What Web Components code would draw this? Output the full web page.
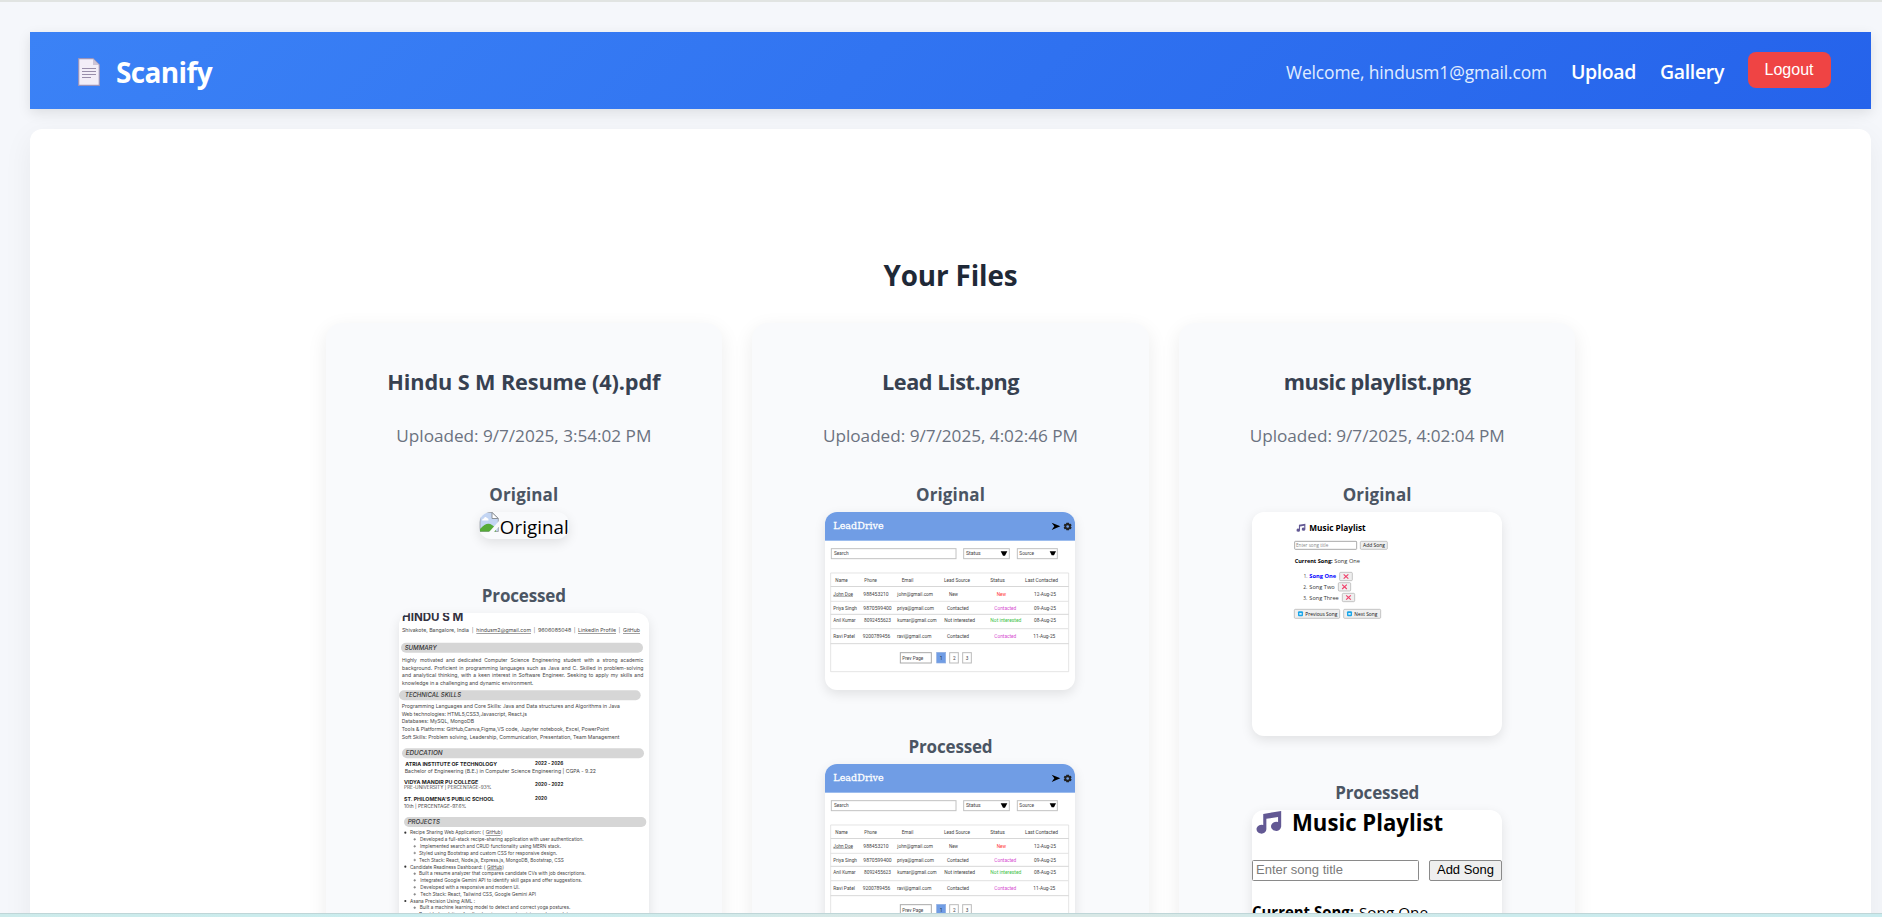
<!DOCTYPE html>
<html lang="en">
<head>
<meta charset="utf-8">
<title>Scanify</title>
<style>
html,body{margin:0;height:100%;overflow:hidden;background:#f5f7fb;font-family:"Open Sans","Noto Sans",sans-serif}
</style>
</head>
<body>
<scanify-app></scanify-app>
<script>
function mount(el, html){
  el.attachShadow({mode:'open'}).innerHTML = html;
}
const esc = s => s.replace(/&/g,'&amp;').replace(/</g,'&lt;');

/* One line of text, tracked so that it fills the width given in "w". */
class FitText extends HTMLElement{
  connectedCallback(){
    if(!this.shadowRoot) mount(this,`<style>:host{display:inline-block;white-space:nowrap}span{display:inline-block}</style><span><slot></slot></span>`);
    const w = +this.getAttribute('w'), span = this.shadowRoot.querySelector('span');
    const n = this.textContent.length, natural = span.getBoundingClientRect().width;
    if(w && natural){
      const ls = (w-natural)/n;
      this.style.letterSpacing = ls.toFixed(3)+'px';
    }
  }
}
customElements.define('fit-text',FitText);

/* SVG text helper: rows of [x, baseline, width, text, extra attributes] */
const rows = list => list.map(([x,y,w,t,a=''])=>`<text x="${x}" y="${y}" textLength="${w}" lengthAdjust="spacingAndGlyphs" ${a}>${esc(t)}</text>`).join('');

const NOTE = `<path d="M8 4 31 0V21a6.5 6.2 0 1 1-4-6V8L12 10.500V24.500a6.300 6 0 1 1-4-5.500Z" transform="scale(.78 .74)" fill="#635994"/>`;

class ResumePreview extends HTMLElement{
  connectedCallback(){
    const bar=(x,y,w,t)=>`<rect x="${x}" y="${y}" width="${w}" height="30" rx="15" fill="#d6d6d6"/><text x="${x+11}" y="${y+21.5}" font-size="19" font-style="italic" font-weight="500" fill="#333" textLength="${t[1]}" lengthAdjust="spacingAndGlyphs">${t[0]}</text>`;
    const B='font-weight="700" font-size="15.5" fill="#222"';
    const dot=(x,y)=>`<circle cx="${x}" cy="${y}" r="3.200" fill="#333"/>`;
    const ring=(x,y)=>`<circle cx="${x}" cy="${y}" r="2.600" fill="#999" stroke="#555"/>`;
    mount(this,`<style>:host{display:block;width:250px;height:354px;border-radius:12px;overflow:hidden;background:#fff;box-shadow:0 4px 12px rgba(0,0,0,.1)}svg{display:block}text{font-family:Inter,"Open Sans",sans-serif}</style>
<svg width="250" height="354" viewBox="27 128 750 1062" font-size="15.5" fill="#484848">
${rows([
[36,153,184,'HINDU S M','font-weight="700" font-size="35" fill="#33323f"'],
[36,186,201,'Shivakote, Bangalore, India'],[246,186,4,'|'],
[259,186,164,'hindusm2@gmail.com','text-decoration="underline"'],[431,186,4,'|'],
[444,186,100,'9606085048'],[552,186,4,'|'],
[564,186,114,'LinkedIn Profile','text-decoration="underline"'],[686,186,4,'|'],
[699,186,51,'GitHub','text-decoration="underline"'],
[36,276,724,'Highly motivated and dedicated Computer Science Engineering student with a strong academic','word-spacing="5"'],
[36,299,724,'background. Proficient in programming languages such as Java and C. Skilled in problem-solving','word-spacing="2"'],
[36,321,724,'and analytical thinking, with a keen interest in Software Engineer. Seeking to apply my skills and','word-spacing="2"'],
[36,343,394,'knowledge in a challenging and dynamic environment.'],
[35,414,655,'Programming Languages and Core Skills: Java and Data structures and Algorithms in Java'],
[35,437,376,'Web technologies: HTML5,CSS3,Javascript, React.js'],
[35,459,217,'Databases: MySQL, MongoDB'],
[35,482,622,'Tools & Platforms: GitHub,Canva,Figma,VS code, Jupyter notebook, Excel, PowerPoint'],
[35,505,653,'Soft Skills: Problem solving, Leadership, Communication, Presentation, Team Management'],
[46,586,275,'ATRIA INSTITUTE OF TECHNOLOGY',B],[435,583,85,'2022 - 2026',B],
[44,609,574,'Bachelor of Engineering (B.E.) in Computer Science Engineering | CGPA - 9.22'],
[42,641,223,'VIDYA MANDIR PU COLLEGE',B],[435,647,85,'2020 - 2022',B],
[42,657,262,'PRE-UNIVERSITY | PERCENTAGE-93%','font-size="13"'],
[42,692,271,"ST. PHILOMENA'S PUBLIC SCHOOL",B],[435,689,36,'2020',B],
[42,713,187,'10th | PERCENTAGE-97.6%','font-size="14"'],
[60,792,222,'Recipe Sharing Web Application: ('],[287,792,45,'GitHub','text-decoration="underline"'],[333,792,5,')'],
[90,812,491,'Developed a full-stack recipe-sharing application with user authentication.'],
[90,833,423,'Implemented search and CRUD functionality using MERN stack.'],
[87,853,414,'Styled using Bootstrap and custom CSS for responsive design.'],
[87,874,434,'Tech Stack: React, Node.js, Express.js, MongoDB, Bootstrap, CSS'],
[60,895,226,'Candidate Readiness Dashboard: ('],[291,895,45,'GitHub','text-decoration="underline"'],[337,895,5,')'],
[87,915,500,'Built a resume analyzer that compares candidate CVs with job descriptions.'],
[91,935,485,'Integrated Google Gemini API to identify skill gaps and offer suggestions.'],
[91,956,298,'Developed with a responsive and modern UI.'],
[91,977,347,'Tech Stack: React, Tailwind CSS, Google Gemini API'],
[60,997,195,'Asana Precision Using AIML :'],
[89,1017,452,'Built a machine learning model to detect and correct yoga postures.'],
[87,1038,460,'Provided real-time feedback using computer vision and pose data.']])}
${bar(33,217,726,['SUMMARY',96])}${bar(27,360,725,['TECHNICAL SKILLS',175]).replace('x="38"','x="45"').replace('textLength="175"','textLength="168"')}${bar(36,534,726,['EDUCATION',111])}${bar(42,740,727,['PROJECTS',97])}
${[787,889,992].map(y=>dot(46,y)).join('')}${[807,828,848,869,910,930,951,972,1012,1033].map(y=>ring(74,y)).join('')}
</svg>`);
  }
}
customElements.define('resume-preview',ResumePreview);

class LeadPreview extends HTMLElement{
  connectedCallback(){
    const data=[
      [347,['John Doe',70,59],['988453210',160,76],['john@gmail.com',262,107],['New',417,27],['New',560,28,'#f33'],['12-Aug-25',672,66]],
      [389,['Priya Singh',70,71],['9870599400',160,85],['priya@gmail.com',261,111],['Contacted',411,65],['Contacted',553,66,'#d64bd0'],['09-Aug-25',672,66]],
      [426,['Anil Kumar',70,67],['8092455623',162,81],['kumar@gmail.com',262,118],['Not interested',403,92],['Not interested',541,93,'#3fc24a'],['08-Aug-25',672,66]],
      [473,['Ravi Patel',70,65],['9200789456',158,83],['ravi@gmail.com',261,103],['Contacted',411,66],['Contacted',553,66,'#d64bd0'],['11-Aug-25',670,66]]];
    const body=data.flatMap(([y,...c])=>c.map(([t,x,w,f])=>[x,y,w,t,f?`fill="${f}"`:'']));
    mount(this,`<style>:host{display:block;width:250px;height:178px;border-radius:12px;overflow:hidden;background:#fff;box-shadow:0 4px 12px rgba(0,0,0,.1)}svg{display:block}text{font-family:Roboto,"Open Sans",sans-serif}</style>
<svg width="250" height="178" viewBox="45 96 750 534" font-size="15.500" fill="#444">
<rect x="45" y="96" width="750" height="86" fill="#709de5"/><path d="M45 181.500H795" stroke="#9dbdee" stroke-width="3"/>
<text x="70" y="148" font-size="29" font-weight="500" fill="#fff" stroke="#fff" stroke-width=".8" textLength="151" lengthAdjust="spacingAndGlyphs" style="font-family:'DejaVu Serif',serif">LeadDrive</text>
<path d="M725 128 751 139 725 150 733 139Z" fill="#000"/>
<path d="M769 128h8l1 4 4-1 3 5-3 3 3 4-3 5-4-1-1 4h-8l-1-4-4 1-3-5 3-4-3-3 3-5 4 1Z" fill="#222"/><circle cx="773" cy="139.500" r="4" fill="#709de5"/>
<g fill="none" stroke="#c2c2c2" stroke-width="3"><rect x="64" y="206" width="374" height="30"/><rect x="461" y="206" width="137" height="30"/><rect x="622" y="206" width="120" height="30"/></g>
<path d="M572 214h20l-7 13h-6ZM719 214h19l-6 12h-7Z" fill="#000"/>
<g fill="none" stroke="#dedede" stroke-width="2.500"><path d="M62 279V575H776V279Z"/><path d="M62 319.500H776M62 403H776M62 491H776" stroke="#cfcfcf"/><path d="M62 364H776"/><path d="M62 446H776" stroke="#e6e6e6" stroke-width="4"/></g>
${rows([[72,226,44,'Search'],[468,226,44,'Status'],[628,224,44,'Source'],
[76,307,37,'Name'],[163,307,38,'Phone'],[275,307,35,'Email'],[402,307,78,'Lead Source'],[541,307,44,'Status'],[645,307,99,'Last Contacted'],...body])}
<path d="M70 349.500H129" stroke="#777" stroke-width="1.500"/>
<rect x="271" y="518" width="93" height="31" fill="#fff" stroke="#aaa" stroke-width="3"/>
<rect x="380" y="517" width="27" height="32" fill="#709de5" stroke="#90aee0" stroke-width="2"/>
<rect x="419" y="518" width="26" height="31" fill="#fff" stroke="#bbb" stroke-width="3"/><rect x="458" y="518" width="26" height="31" fill="#fff" stroke="#bbb" stroke-width="3"/>
${rows([[277,539,63,'Prev Page'],[390,539,7,'1','fill="#111"'],[429,539,8,'2'],[467,539,8,'3']])}
</svg>`);
  }
}
customElements.define('lead-preview',LeadPreview);

class PlaylistPreview extends HTMLElement{
  connectedCallback(){
    const btn=(x,y,w,h)=>`<rect x="${x}" y="${y}" width="${w}" height="${h}" rx="3" fill="#efefef" stroke="#aaa" stroke-width="2"/>`;
    const del=(x,y,w)=>btn(x,y,w,25)+`<path d="M${x+w/2-7} ${y+6}l14 13m0-13l-14 13" stroke="#f0406a" stroke-width="3.500"/>`;
    mount(this,`<style>:host{display:block;width:250px;height:224px;border-radius:12px;overflow:hidden;background:#fff;box-shadow:0 4px 12px rgba(0,0,0,.1)}svg{display:block}text{font-family:"Open Sans",sans-serif}</style>
<svg width="250" height="224" viewBox="36 96 750 672" font-size="17" fill="#333">
<g transform="translate(170 131) scale(1.080)">${NOTE}</g>
<rect x="164" y="184" width="186" height="24" rx="2" fill="#fff" stroke="#999" stroke-width="2.500"/>
${btn(361,184,81,24)}${del(299,277,38)}${del(295,308,37)}${del(307,340,37)}${btn(163,388,136,27)}${btn(311,388,111,27)}
<rect x="174" y="394" width="15" height="15" rx="3" fill="#1aa5e8"/><path d="M178 399h7v5h-7z" fill="#d8f1fc"/>
<rect x="321" y="394" width="15" height="15" rx="3" fill="#1aa5e8"/><path d="M325 399h7v5h-7z" fill="#d8f1fc"/>
${rows([[208,152,169,'Music Playlist','font-weight="700" font-size="25" fill="#000"'],
[168,201,97,'Enter song title','fill="#888" font-size="15"'],[369,201,66,'Add Song','fill="#111" font-size="15"'],
[164,249,114,'Current Song:','font-weight="700" fill="#000"'],[283,249,77,'Song One'],
[191,295,11,'1.'],[208,295,80,'Song One','font-weight="700" fill="#00f"'],
[190,327,12,'2.'],[208,327,76,'Song Two'],[190,359,12,'3.'],[208,359,88,'Song Three'],
[196,407,96,'Previous Song','fill="#111" font-size="15"'],[343,407,69,'Next Song','fill="#111" font-size="15"']])}
</svg>`);
  }
}
customElements.define('playlist-preview',PlaylistPreview);

/* Cropped, full-scale version of the playlist page */
class PlaylistCrop extends HTMLElement{
  connectedCallback(){
    mount(this,`<style>:host{display:block;width:250px;height:220px;border-radius:12px;overflow:hidden;background:#fff;box-shadow:0 4px 12px rgba(0,0,0,.1)}svg{display:block}text{font-family:"Open Sans",sans-serif}</style>
<svg width="250" height="220" viewBox="0 0 250 220" fill="#000">
<g transform="translate(5 1)">${NOTE}</g>
<rect x=".5" y="50.500" width="166" height="20" rx="1" fill="#fff" stroke="#8a8a8a"/>
<rect x="177.500" y="50.500" width="72" height="20" rx="1.500" fill="#efefef" stroke="#8a8a8a"/>
${rows([[40,20.500,151,'Music Playlist','font-weight="700" font-size="23"'],
[4,64,87,'Enter song title','fill="#7b7b7b" style="font-family:Liberation Sans" font-size="13.3"'],
[185,64,57,'Add Song','style="font-family:Liberation Sans" font-size="13.3"'],
[0,108,102,'Current Song:','font-weight="700" font-size="15.300"'],[107,108,69,'Song One','font-size="15.300"']])}
</svg>`);
  }
}
customElements.define('playlist-crop',PlaylistCrop);

class BrokenImage extends HTMLElement{
  connectedCallback(){
    mount(this,`<style>:host{display:flex;width:90px;height:27px;border-radius:12px;overflow:hidden;box-shadow:0 4px 12px rgba(0,0,0,.1);color:#000;font-size:18.700px;line-height:29px}svg{flex:none;margin-right:1px}</style>
<svg width="20" height="20" viewBox="0 0 20 20"><path d="M1 .5H13L19.300 6.500V19.500H1Z" fill="#c3d5f3" stroke="#a0a5ad"/><path d="M13 .5V6.500H19.300Z" fill="#fff" stroke="#8b9097"/><path d="M3 8.500Q3 6.500 5 6.500 6 3.800 8 6 10 6.300 9.500 8.500Z" fill="#fff"/><path d="M1 19.500V17Q8 9 13 13L17 16V19.500Z" fill="#56ab38"/><path d="M20 9 10 20H15L20 14.500Z" fill="#f9fafc"/></svg><fit-text w="69">Original</fit-text>`);
  }
}
customElements.define('broken-image',BrokenImage);

class FileCard extends HTMLElement{
  connectedCallback(){
    const a=n=>this.getAttribute(n);
    mount(this,`<style>
:host{display:flex;flex-direction:column;align-items:center;box-sizing:border-box;height:760px;padding-top:44px;background:#f9fafc;border-radius:16px;box-shadow:0 6px 20px rgba(0,0,0,.08)}
h3{margin:0;font-size:21.700px;line-height:30px;color:#374151;font-weight:700}
p{margin:27px 0 35px;font-size:17.200px;line-height:24px;color:#6b7280}
h4{margin:0 0 5px;font-size:17px;line-height:24px;color:#4b5563;font-weight:700}
h4.next{margin-top:45px}
</style>
<h3><fit-text w="${a('title-width')}">${esc(a('name'))}</fit-text></h3>
<p><fit-text w="255">Uploaded: ${a('date')}</fit-text></p>
<h4><fit-text w="69">Original</fit-text></h4><slot name="original"></slot>
<h4 class="next"><fit-text w="84">Processed</fit-text></h4><slot name="processed"></slot>`);
  }
}
customElements.define('file-card',FileCard);

class NavBar extends HTMLElement{
  connectedCallback(){
    mount(this,`<style>
:host{display:flex;align-items:center;justify-content:space-between;flex:none;box-sizing:border-box;height:77px;padding:2px 40px 0 48px;background:linear-gradient(135deg,#3b82f6,#2563eb);box-shadow:0 4px 12px rgba(0,0,0,.1);color:#fff}
.brand{display:flex;align-items:center;gap:16px;font-size:28px;font-weight:700;line-height:38px}
.brand svg{margin-top:1px}
nav{display:flex;align-items:center;gap:24px;font-size:19.500px;font-weight:600;line-height:26px}
.hi{font-size:17.400px;font-weight:400;color:#e0edff}
button{font:16px "Liberation Sans",sans-serif;color:#fff;background:#ef4444;border:0;border-radius:8px;width:83px;height:36px;padding:0 1px 0 0;margin-bottom:3px}
</style>
<div class="brand"><svg width="22" height="28" viewBox="0 0 22 28"><path d="M.7.700H15L21.300 7V27.300H.700Z" fill="#f3eef8" stroke="#9a93ba" stroke-width="1.200"/><path d="M15 .700V7H21.300Z" fill="#cdc4d6"/><path d="M4 10.500H18M4 13.500H18M4 16.500H18M4 19.500H13" stroke="#998eaa" stroke-width="1.100"/></svg><fit-text w="96">Scanify</fit-text></div>
<nav><fit-text class="hi" w="261">Welcome, hindusm1@gmail.com</fit-text><fit-text w="65">Upload</fit-text><fit-text w="64">Gallery</fit-text><button>Logout</button></nav>`);
  }
}
customElements.define('nav-bar',NavBar);

class ScanifyApp extends HTMLElement{
  connectedCallback(){
    mount(this,`<style>
:host{display:flex;flex-direction:column;height:100vh;overflow:hidden}
.top{flex:none;height:2px;background:#e1e4e2}
.view{flex:1;min-height:0;overflow:hidden;display:flex;flex-direction:column;gap:20px;padding:30px 11px 0 30px;box-sizing:border-box}
main{flex:none;display:flex;flex-direction:column;align-items:center;box-sizing:border-box;height:1100px;padding-top:127px;background:#fff;border-radius:12px;box-shadow:0 8px 30px rgba(0,0,0,.06)}
h2{margin:0 0 29px;font-size:27.800px;line-height:38px;color:#1f2937;font-weight:700}
.grid{display:grid;width:1250px;grid-template-columns:repeat(3,1fr);gap:30px}
.edge{flex:none;height:4px;background:linear-gradient(90deg,#cdebeb,#c9edef 28%,#d8e8e6 46%,#d8e8e6 60%,#cbebed 80%,#c9ebee);box-shadow:inset 0 1px #bfd6d8}
</style>
<div class="top"></div>
<div class="view"><nav-bar></nav-bar>
<main><h2><fit-text w="134">Your Files</fit-text></h2>
<div class="grid">
<file-card name="Hindu S M Resume (4).pdf" title-width="273" date="9/7/2025, 3:54:02 PM"><broken-image slot="original"></broken-image><resume-preview slot="processed"></resume-preview></file-card>
<file-card name="Lead List.png" title-width="137" date="9/7/2025, 4:02:46 PM"><lead-preview slot="original"></lead-preview><lead-preview slot="processed"></lead-preview></file-card>
<file-card name="music playlist.png" title-width="187" date="9/7/2025, 4:02:04 PM"><playlist-preview slot="original"></playlist-preview><playlist-crop slot="processed"></playlist-crop></file-card>
</div></main></div>
<div class="edge"></div>`);
  }
}
customElements.define('scanify-app',ScanifyApp);
</script>
</body>
</html>
